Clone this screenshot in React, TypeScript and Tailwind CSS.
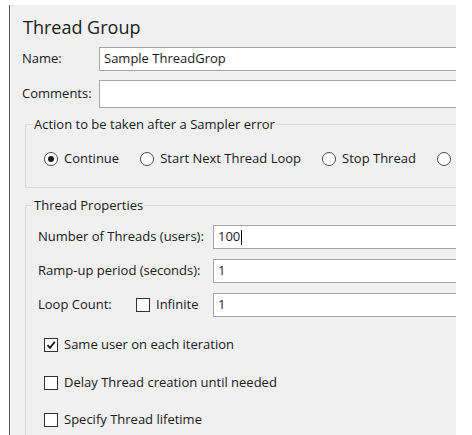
import React from 'react'

const font = { fontFamily: '"Open Sans", "Noto Sans", sans-serif' }

function Radio({ checked, label }: { checked?: boolean; label: string }) {
  return (
    <div className="flex items-center gap-[6px] shrink-0">
      <span className="w-[14px] h-[14px] rounded-full border border-[#4a4a4a] bg-white flex items-center justify-center shrink-0">
        {checked && <span className="w-[6px] h-[6px] rounded-full bg-[#1a1a1a]" />}
      </span>
      <span className="whitespace-nowrap">{label}</span>
    </div>
  )
}

function Check({ checked, label }: { checked?: boolean; label: string }) {
  return (
    <div className="flex items-center gap-[6px] h-[18px]">
      <span className="w-[14px] h-[14px] border border-[#333] bg-white flex items-center justify-center shrink-0">
        {checked && (
          <svg width="10" height="10" viewBox="0 0 10 10">
            <path d="M1.5 5.2 L4 7.8 L8.8 1.8" fill="none" stroke="#1a1a1a" strokeWidth="1.8" />
          </svg>
        )}
      </span>
      <span className="whitespace-nowrap">{label}</span>
    </div>
  )
}

function Field({ value, caret, h = 'h-[24px]' }: { value?: string; caret?: boolean; h?: string }) {
  return (
    <div className={`flex-1 ${h} bg-white border border-r-0 border-[#a5a5a5] flex items-center pl-[4px]`}>
      <span>{value}</span>
      {caret && <span className="w-px h-[15px] bg-black ml-[1px]" />}
    </div>
  )
}

export default function App() {
  return (
    <div className="w-[472px] h-[435px] bg-white overflow-hidden pt-[5px] pl-[9px] text-[13px] text-[#1a1a1a]" style={font}>
      <div className="w-[447px] h-[430px] bg-[#f0f0f0] border-l border-[#5a5a5a] overflow-hidden">
        <div className="pl-[13px] pt-[10px] h-[42px] text-[18px] leading-[24px]">Thread Group</div>

        <div className="flex items-center h-[24px]">
          <div className="w-[89px] pl-[12px]">Name:</div>
          <Field value="Sample ThreadGrop" />
        </div>

        <div className="flex items-center h-[28px] mt-[9px]">
          <div className="w-[89px] pl-[12px]">Comments:</div>
          <Field h="h-[28px]" />
        </div>

        <fieldset className="ml-[15px] mt-[8px] min-w-0 overflow-hidden border border-r-0 border-[#d9d9d9] h-[72px] rounded-l-[2px]">
          <legend className="ml-[7px] px-[1px] leading-[16px]">Action to be taken after a Sampler error</legend>
          <div className="flex items-center gap-[21px] pl-[18px] pt-[17px]">
            <Radio checked label="Continue" />
            <Radio label="Start Next Thread Loop" />
            <Radio label="Stop Thread" />
            <Radio label="Stop Test" />
          </div>
        </fieldset>

        <fieldset className="ml-[15px] mt-[9px] min-w-0 overflow-hidden border border-r-0 border-b-0 border-[#d9d9d9] h-[240px] rounded-tl-[2px]">
          <legend className="ml-[7px] px-[1px] leading-[16px]">Thread Properties</legend>
          <div className="pl-[12px] pt-[12px]">
            <div className="flex items-center h-[24px]">
              <div className="w-[175px]">Number of Threads (users):</div>
              <Field value="100" caret />
            </div>
            <div className="flex items-center h-[24px] mt-[10px]">
              <div className="w-[175px]">Ramp-up period (seconds):</div>
              <Field value="1" />
            </div>
            <div className="flex items-center h-[24px] mt-[10px]">
              <div className="w-[98px]">Loop Count:</div>
              <div className="w-[77px]">
                <Check label="Infinite" />
              </div>
              <Field value="1" />
            </div>
            <div className="flex flex-col gap-[19.5px] pl-[6px] mt-[19px]">
              <Check checked label="Same user on each iteration" />
              <Check label="Delay Thread creation until needed" />
              <Check label="Specify Thread lifetime" />
            </div>
          </div>
        </fieldset>
      </div>
    </div>
  )
}
